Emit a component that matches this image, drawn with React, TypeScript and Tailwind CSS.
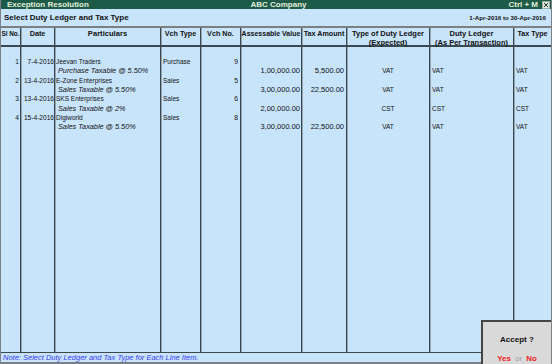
import React from 'react';

interface Entry {
    sl: string;
    date: string;
    party: string;
    ledger: string;
    vchType: string;
    vchNo: string;
    value: string;
    tax: string;
    expected: string;
    duty: string;
    taxType: string;
}

const entries: Entry[] = [
    { sl: '1', date: '7-4-2016', party: 'Jeevan Traders', ledger: 'Purchase Taxable @ 5.50%', vchType: 'Purchase', vchNo: '9', value: '1,00,000.00', tax: '5,500.00', expected: 'VAT', duty: 'VAT', taxType: 'VAT' },
    { sl: '2', date: '13-4-2016', party: 'E-Zone Enterprises', ledger: 'Sales Taxable @ 5.50%', vchType: 'Sales', vchNo: '5', value: '3,00,000.00', tax: '22,500.00', expected: 'VAT', duty: 'VAT', taxType: 'VAT' },
    { sl: '3', date: '13-4-2016', party: 'SKS Enterprises', ledger: 'Sales Taxable @ 2%', vchType: 'Sales', vchNo: '6', value: '2,00,000.00', tax: '', expected: 'CST', duty: 'CST', taxType: 'CST' },
    { sl: '4', date: '15-4-2016', party: 'Digiworld', ledger: 'Sales Taxable @ 5.50%', vchType: 'Sales', vchNo: '8', value: '3,00,000.00', tax: '22,500.00', expected: 'VAT', duty: 'VAT', taxType: 'VAT' },
];

interface Column {
    head: string[];
    width: string;
    align: string;
    headSize: string;
    firstSize: string;
    secondSize: string;
    first?: (e: Entry) => string;
    second?: (e: Entry) => string;
    italic?: boolean;
}

const columns: Column[] = [
    { head: ['Sl No.'], width: 'w-[20px]', align: 'text-right pr-[1px]', headSize: 'text-[6.4px]', firstSize: 'text-[6.6px]', secondSize: 'text-[6.5px]', first: (e) => e.sl },
    { head: ['Date'], width: 'w-[34px]', align: 'text-right pr-0', headSize: 'text-[7.2px]', firstSize: 'text-[6.6px]', secondSize: 'text-[6.5px]', first: (e) => e.date },
    { head: ['Particulars'], width: 'w-[106px]', align: 'text-left pl-[1px]', headSize: 'text-[7.6px]', firstSize: 'text-[6.5px]', secondSize: 'text-[7.3px]', first: (e) => e.party, second: (e) => e.ledger, italic: true },
    { head: ['Vch Type'], width: 'w-[40px]', align: 'text-left pl-[2px]', headSize: 'text-[7.2px]', firstSize: 'text-[6.5px]', secondSize: 'text-[6.5px]', first: (e) => e.vchType },
    { head: ['Vch No.'], width: 'w-[40px]', align: 'text-right pr-[2px]', headSize: 'text-[7.2px]', firstSize: 'text-[6.8px]', secondSize: 'text-[6.5px]', first: (e) => e.vchNo },
    { head: ['Assessable Value'], width: 'w-[61px]', align: 'text-right pr-[1px]', headSize: 'text-[7px]', firstSize: 'text-[6.5px]', secondSize: 'text-[7.5px]', second: (e) => e.value },
    { head: ['Tax Amount'], width: 'w-[45px]', align: 'text-right pr-[2px]', headSize: 'text-[7.2px]', firstSize: 'text-[6.5px]', secondSize: 'text-[7.5px]', second: (e) => e.tax },
    { head: ['Type of Duty Ledger', '(Expected)'], width: 'w-[83px]', align: 'text-center', headSize: 'text-[7.5px]', firstSize: 'text-[6.5px]', secondSize: 'text-[6.5px]', second: (e) => e.expected },
    { head: ['Duty Ledger', '(As Per Transaction)'], width: 'w-[84px]', align: 'text-left pl-[2px]', headSize: 'text-[7.5px]', firstSize: 'text-[6.5px]', secondSize: 'text-[6.5px]', second: (e) => e.duty },
    { head: ['Tax Type'], width: 'w-[37px]', align: 'text-left pl-[2px]', headSize: 'text-[7.2px]', firstSize: 'text-[6.5px]', secondSize: 'text-[6.5px]', second: (e) => e.taxType },
];

const divider = 'border-r border-[#3b4850] shadow-[1px_0_0_#92a4b1]';

const CloseBox = () => (
    <svg width="8" height="8" viewBox="0 0 8 8" className="ml-[4px]">
        <rect x="0.5" y="0.5" width="7" height="7" fill="#dfe7dc" stroke="#9fb0a6" />
        <path d="M2 2 L6 6 M6 2 L2 6" stroke="#2d3b35" strokeWidth="1" />
    </svg>
);

export default function App() {
    return (
        <div className="relative flex h-[364px] w-[552px] flex-col overflow-hidden border-x border-[#7d8084] bg-[#c8e4fb] font-['Liberation_Sans',Arial,sans-serif] text-[#111]">
            {/* title bar */}
            <div className="flex h-[9px] items-center bg-[#1d5a48] text-[8px] font-bold leading-[9px] text-[#e4eedb]">
                <div className="flex-1 pl-[6px]">Exception Resolution</div>
                <div>ABC Company</div>
                <div className="flex flex-1 items-center justify-end pr-[1px]">
                    <span>Ctrl + M</span>
                    <CloseBox />
                </div>
            </div>

            {/* subtitle */}
            <div className="flex h-[17px] items-center justify-between pl-[3px] pr-[5px] text-[8px] leading-[10px]">
                <span className="font-bold">Select Duty Ledger and Tax Type</span>
                <span className="text-[6.2px] font-bold">1-Apr-2016 to 30-Apr-2016</span>
            </div>
            <div className="h-[2px] bg-[#7b7f83]" />

            {/* header */}
            <div className="flex h-[19px] border-b-2 border-[#3b4850]">
                {columns.map((c, i) => (
                    <div key={i} className={`${c.width} ${i < columns.length - 1 ? divider : ''} ${c.headSize} flex flex-col items-center pt-[1px] font-bold leading-[9px]`}>
                        {c.head.map((h) => (
                            <span key={h} className="whitespace-nowrap">{h}</span>
                        ))}
                    </div>
                ))}
            </div>

            {/* body */}
            <div className="flex flex-1 border-b border-[#3b4850]">
                {columns.map((c, i) => (
                    <div key={i} className={`${c.width} ${i < columns.length - 1 ? divider : ''} flex flex-col pt-[10px] leading-[9.33px]`}>
                        {entries.map((e, r) => (
                            <div key={r} className={`${c.align} whitespace-nowrap`}>
                                <div className={`h-[9.33px] ${c.firstSize}`}>{c.first ? c.first(e) : ''}</div>
                                <div className={`h-[9.33px] ${c.secondSize} ${c.italic ? 'pl-[2px] italic' : ''}`}>
                                    {c.second ? c.second(e) : ''}
                                </div>
                            </div>
                        ))}
                    </div>
                ))}
            </div>

            {/* note */}
            <div className="flex h-[9px] items-center pl-[2px] text-[7.5px] italic leading-[9px] text-[#3b3bf5]">
                Note: Select Duty Ledger and Tax Type for Each Line Item.
            </div>
            <div className="h-[2px] bg-[#7b7f83]" />

            {/* accept prompt */}
            <div className="absolute bottom-0 right-0 flex h-[44px] w-[70px] flex-col items-center border-l-2 border-t-2 border-[#444] bg-[#d9d9d9] text-[8px] font-bold">
                <div className="mt-[12px]">Accept ?</div>
                <div className="mt-[7px] flex gap-[4px]">
                    <span className="text-[#f01c1c]">Yes</span>
                    <span className="font-normal text-[#a0a0a0]">or</span>
                    <span className="text-[#f01c1c]">No</span>
                </div>
            </div>
        </div>
    );
}
